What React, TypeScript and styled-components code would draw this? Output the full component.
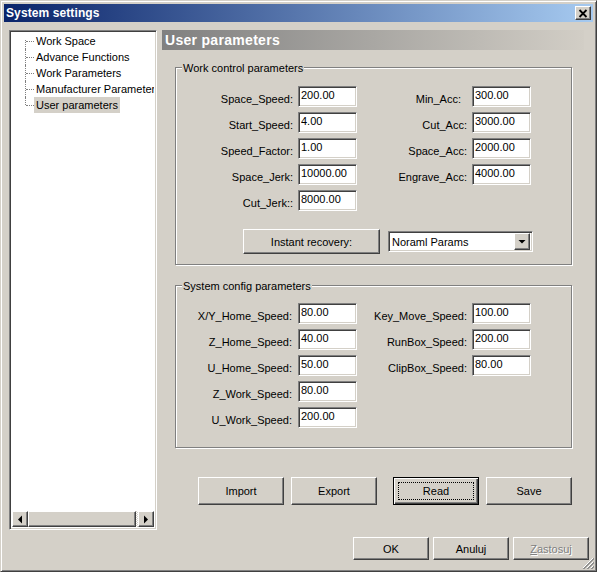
import React from "react";
import styled, { createGlobalStyle, css } from "styled-components";

const GlobalStyle = createGlobalStyle`
  html, body {
    margin: 0;
    padding: 0;
    background: #ffffff;
  }
  * {
    box-sizing: border-box;
  }
  body {
    font-family: "Liberation Sans", Arial, sans-serif;
    font-size: 11px;
    color: #000;
  }
`;

const raised = css`
  border: 1px solid;
  border-color: #ffffff #404040 #404040 #ffffff;
  box-shadow: inset -1px -1px 0 #808080, inset 1px 1px 0 #d4d0c8;
  background: #d4d0c8;
`;

const sunken = css`
  border: 1px solid;
  border-color: #808080 #ffffff #ffffff #808080;
  box-shadow: inset 1px 1px 0 #404040, inset -1px -1px 0 #d4d0c8;
`;

const Window = styled.div`
  position: relative;
  width: 597px;
  height: 572px;
  padding: 2px;
  background: #d4d0c8;
  border: 1px solid;
  border-color: #d4d0c8 #404040 #404040 #d4d0c8;
  box-shadow: inset 1px 1px 0 #ffffff, inset -1px -1px 0 #808080;
  display: flex;
  flex-direction: column;
`;

const TitleBar = styled.div`
  height: 18px;
  margin: 1px 1px 0 1px;
  display: flex;
  align-items: center;
  justify-content: space-between;
  padding: 0 2px 0 2px;
  background: linear-gradient(to right, #0a246a, #a6caf0);
`;

const Title = styled.span`
  color: #fff;
  font-weight: bold;
  font-size: 12px;
  letter-spacing: 0.1px;
`;

const CloseButton = styled.div`
  ${raised};
  width: 16px;
  height: 14px;
  display: flex;
  align-items: center;
  justify-content: center;
`;

const Main = styled.div`
  display: flex;
  gap: 5px;
  margin-top: 8px;
  padding-left: 6px;
  height: 500px;
`;

const TreePanel = styled.div`
  ${sunken};
  width: 148px;
  height: 500px;
  background: #fff;
  padding: 2px;
  display: flex;
  flex-direction: column;
`;

const TreeList = styled.ul`
  list-style: none;
  margin: 0;
  padding: 0;
  flex: 1;
  overflow: hidden;
`;

const TreeItem = styled.li<{ $first?: boolean; $last?: boolean }>`
  position: relative;
  height: 16px;
  padding-left: 22px;
  white-space: nowrap;
  display: flex;
  align-items: center;

  &::before {
    content: "";
    position: absolute;
    left: 13px;
    top: ${(p) => (p.$first ? "7px" : "0")};
    bottom: ${(p) => (p.$last ? "8px" : "0")};
    border-left: 1px dotted #808080;
  }

  &::after {
    content: "";
    position: absolute;
    left: 14px;
    top: 8px;
    width: 8px;
    border-top: 1px dotted #808080;
  }
`;

const TreeLabel = styled.span<{ $selected?: boolean }>`
  padding: 0 2px;
  line-height: 16px;
  background: ${(p) => (p.$selected ? "#d4d0c8" : "transparent")};
`;

const HScroll = styled.div`
  height: 16px;
  display: flex;
`;

const ScrollArrow = styled.div`
  ${raised};
  width: 16px;
  height: 16px;
  display: flex;
  align-items: center;
  justify-content: center;
`;

const ScrollThumb = styled.div`
  ${raised};
  width: 108px;
  height: 16px;
`;

const ScrollTrack = styled.div`
  flex: 1;
  background: repeating-conic-gradient(#ffffff 0 25%, #d4d0c8 0 50%) 0 0 / 2px 2px;
`;

const RightPanel = styled.div`
  width: 422px;
  display: flex;
  flex-direction: column;
`;

const PageHeader = styled.div`
  height: 20px;
  padding-left: 3px;
  display: flex;
  align-items: center;
  color: #fff;
  font-weight: bold;
  font-size: 14px;
  letter-spacing: 0.3px;
  background: linear-gradient(to right, #808080, #d2cec6);
`;

const GroupBox = styled.div<{ $top: number; $pt: number; $pb: number }>`
  position: relative;
  margin: ${(p) => p.$top}px 0 0 13px;
  width: 397px;
  padding: ${(p) => p.$pt}px 0 ${(p) => p.$pb}px 0;
  border: 1px solid #808080;
  box-shadow: inset 1px 1px 0 #ffffff, 1px 1px 0 #ffffff;
`;

const Caption = styled.span`
  position: absolute;
  top: -6px;
  left: 6px;
  padding: 0 1px;
  line-height: 13px;
  background: #d4d0c8;
`;

const FieldGrid = styled.div`
  display: grid;
  grid-template-columns: 122px 59px 115px 59px;
  grid-auto-rows: 21px;
  row-gap: 5px;
`;

const FieldLabel = styled.label<{ $trim?: number }>`
  text-align: right;
  padding-right: ${(p) => 5 + (p.$trim ?? 0)}px;
  padding-top: 3px;
  line-height: 21px;
  white-space: nowrap;
`;

const FieldInput = styled.input`
  ${sunken};
  width: 59px;
  height: 21px;
  padding: 0 1px 3px 2px;
  background: #fff;
  font-family: "Liberation Sans", Arial, sans-serif;
  font-size: 11px;
  color: #000;
  outline: none;
`;

const RecoveryRow = styled.div`
  display: flex;
  align-items: center;
  gap: 8px;
  margin-top: 18px;
  padding-left: 67px;
`;

const Combo = styled.div`
  ${sunken};
  width: 145px;
  height: 21px;
  background: #fff;
  display: flex;
  align-items: center;
  padding: 2px;
`;

const ComboText = styled.span`
  flex: 1;
  padding-left: 1px;
`;

const ComboArrow = styled.div`
  ${raised};
  width: 16px;
  height: 17px;
  display: flex;
  align-items: center;
  justify-content: center;
`;

const Button = styled.button<{ $w: number; $h: number; $default?: boolean }>`
  ${raised};
  position: relative;
  width: ${(p) => p.$w}px;
  height: ${(p) => p.$h}px;
  padding: 0;
  font-family: "Liberation Sans", Arial, sans-serif;
  font-size: 11px;
  color: #000;
  cursor: pointer;

  ${(p) =>
    p.$default &&
    css`
      border: 1px solid #000;
      box-shadow: inset 1px 1px 0 #ffffff, inset -1px -1px 0 #404040,
        inset -2px -2px 0 #808080;
      &::after {
        content: "";
        position: absolute;
        inset: 4px;
        border: 1px dotted #000;
      }
    `}

  &:disabled {
    color: #808080;
    text-shadow: 1px 1px 0 #ffffff;
    cursor: default;
  }
`;

const ActionRow = styled.div`
  display: flex;
  gap: 16px;
  margin-top: 29px;
  padding-left: 36px;
`;

const ButtonPair = styled.div`
  display: flex;
  gap: 7px;
`;

const Footer = styled.div`
  display: flex;
  justify-content: flex-end;
  gap: 4px;
  margin-top: 7px;
  padding-right: 5px;
`;

const Grip = styled.div`
  position: absolute;
  right: 2px;
  bottom: 2px;
  width: 12px;
  height: 12px;
  line-height: 0;
`;

type Field = { label: string; value: string; trim?: number };

const workLeft: Field[] = [
  { label: "Space_Speed:", value: "200.00" },
  { label: "Start_Speed:", value: "4.00" },
  { label: "Speed_Factor:", value: "1.00" },
  { label: "Space_Jerk:", value: "10000.00" },
  { label: "Cut_Jerk::", value: "8000.00" },
];

const workRight: Field[] = [
  { label: "Min_Acc:", value: "300.00", trim: 6 },
  { label: "Cut_Acc:", value: "3000.00" },
  { label: "Space_Acc:", value: "2000.00" },
  { label: "Engrave_Acc:", value: "4000.00" },
];

const sysLeft: Field[] = [
  { label: "X/Y_Home_Speed:", value: "80.00", trim: 1 },
  { label: "Z_Home_Speed:", value: "40.00", trim: 1 },
  { label: "U_Home_Speed:", value: "50.00", trim: 1 },
  { label: "Z_Work_Speed:", value: "80.00", trim: 1 },
  { label: "U_Work_Speed:", value: "200.00", trim: 1 },
];

const sysRight: Field[] = [
  { label: "Key_Move_Speed:", value: "100.00" },
  { label: "RunBox_Speed:", value: "200.00" },
  { label: "ClipBox_Speed:", value: "80.00" },
];

const treeItems = [
  "Work Space",
  "Advance Functions",
  "Work Parameters",
  "Manufacturer Parameters",
  "User parameters",
];

function FieldCell({ field }: { field?: Field }) {
  if (!field) {
    return (
      <>
        <span />
        <span />
      </>
    );
  }
  return (
    <>
      <FieldLabel $trim={field.trim}>{field.label}</FieldLabel>
      <FieldInput defaultValue={field.value} />
    </>
  );
}

function Fields({ left, right }: { left: Field[]; right: Field[] }) {
  return (
    <FieldGrid>
      {left.map((f, i) => (
        <React.Fragment key={f.label}>
          <FieldCell field={f} />
          <FieldCell field={right[i]} />
        </React.Fragment>
      ))}
    </FieldGrid>
  );
}

const Arrow = ({ dir }: { dir: "left" | "right" | "down" }) => {
  const d =
    dir === "left"
      ? "M5 4.5 L9 0.5 L9 8.5 Z"
      : dir === "right"
      ? "M5 0.5 L9 4.5 L5 8.5 Z"
      : "M3.5 3 L10.5 3 L7 6.5 Z";
  return (
    <svg width="14" height="9" viewBox="0 0 14 9">
      <path d={d} fill="#000" />
    </svg>
  );
};

export default function App() {
  return (
    <>
      <GlobalStyle />
      <Window>
        <TitleBar>
          <Title>System settings</Title>
          <CloseButton>
            <svg width="10" height="9" viewBox="0 0 10 9">
              <path d="M1.5 1 L8.5 8 M8.5 1 L1.5 8" stroke="#000" strokeWidth="1.8" />
            </svg>
          </CloseButton>
        </TitleBar>

        <Main>
          <TreePanel>
            <TreeList>
              {treeItems.map((t, i) => (
                <TreeItem key={t} $first={i === 0} $last={i === treeItems.length - 1}>
                  <TreeLabel $selected={i === treeItems.length - 1}>{t}</TreeLabel>
                </TreeItem>
              ))}
            </TreeList>
            <HScroll>
              <ScrollArrow>
                <Arrow dir="left" />
              </ScrollArrow>
              <ScrollThumb />
              <ScrollTrack />
              <ScrollArrow>
                <Arrow dir="right" />
              </ScrollArrow>
            </HScroll>
          </TreePanel>

          <RightPanel>
            <PageHeader>User parameters</PageHeader>

            <GroupBox $top={17} $pt={18} $pb={10}>
              <Caption>Work control parameters</Caption>
              <Fields left={workLeft} right={workRight} />
              <RecoveryRow>
                <Button $w={137} $h={25}>Instant recovery:</Button>
                <Combo>
                  <ComboText>Noraml Params</ComboText>
                  <ComboArrow>
                    <Arrow dir="down" />
                  </ComboArrow>
                </Combo>
              </RecoveryRow>
            </GroupBox>

            <GroupBox $top={20} $pt={17} $pb={19}>
              <Caption>System config parameters</Caption>
              <Fields left={sysLeft} right={sysRight} />
            </GroupBox>

            <ActionRow>
              <ButtonPair>
                <Button $w={86} $h={28}>Import</Button>
                <Button $w={86} $h={28}>Export</Button>
              </ButtonPair>
              <ButtonPair>
                <Button $w={86} $h={28} $default>
                  Read
                </Button>
                <Button $w={86} $h={28}>Save</Button>
              </ButtonPair>
            </ActionRow>
          </RightPanel>
        </Main>

        <Footer>
          <Button $w={76} $h={23}>OK</Button>
          <Button $w={76} $h={23}>Anuluj</Button>
          <Button $w={76} $h={23} disabled>
            <u>Z</u>astosuj
          </Button>
        </Footer>

        <Grip>
          <svg width="12" height="12" viewBox="0 0 12 12">
            <path d="M11 1 L1 11 M11 5 L5 11 M11 9 L9 11" stroke="#ffffff" strokeWidth="1" />
            <path d="M12 1 L1 12 M12 2 L2 12 M12 5 L5 12 M12 6 L6 12 M12 9 L9 12 M12 10 L10 12" stroke="#808080" strokeWidth="0.8" />
          </svg>
        </Grip>
      </Window>
    </>
  );
}
